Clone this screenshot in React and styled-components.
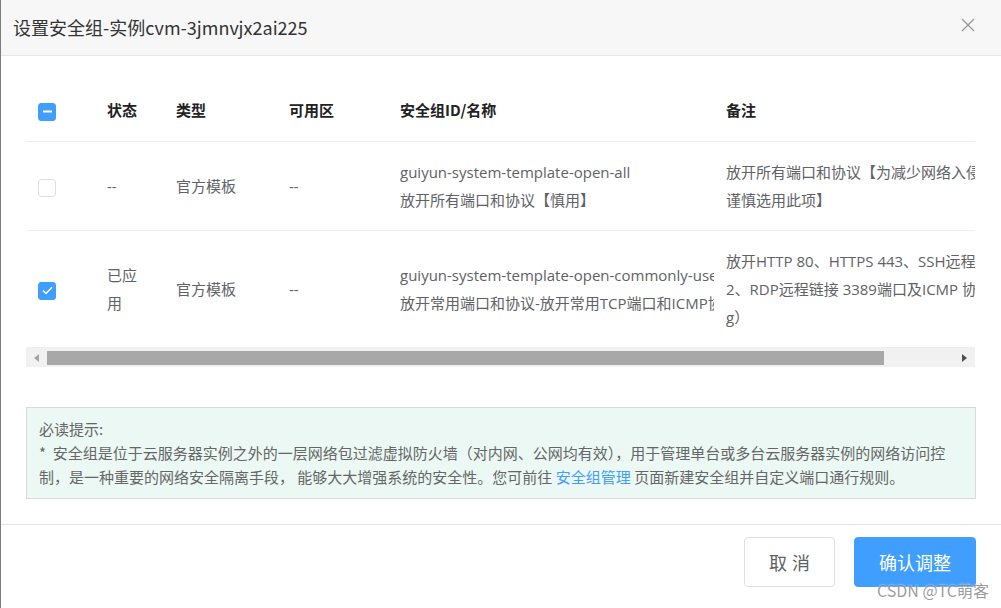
import styled, { createGlobalStyle } from "styled-components";

const GlobalStyle = createGlobalStyle`
  html, body {
    margin: 0;
    padding: 0;
    background: #ffffff;
  }
  body {
    font-family: "Open Sans", "Noto Sans CJK SC", sans-serif;
  }
`;

const Dialog = styled.div`
  position: relative;
  width: 1001px;
  height: 608px;
  box-sizing: border-box;
  border-left: 1px solid #7d7d7d;
  background: #fff;
  display: flex;
  flex-direction: column;
  overflow: hidden;
`;

const Header = styled.div`
  height: 56px;
  box-sizing: border-box;
  background: #f7f7f7;
  border-bottom: 1px solid #e6e6e6;
  display: flex;
  align-items: center;
  justify-content: space-between;
  padding: 0 26px 2px 12px;
`;

const Title = styled.h2`
  margin: 0;
  font-size: 18px;
  font-weight: 400;
  color: #333;
  font-family: "Noto Sans CJK SC", sans-serif;
`;

const CloseBtn = styled.button`
  border: none;
  background: none;
  padding: 0;
  width: 14px;
  height: 14px;
  display: flex;
  cursor: pointer;
  margin-bottom: 4px;
`;

const Body = styled.div`
  padding: 23px 25px 25px 25px;
  border-bottom: 1px solid #e4e4e4;
`;

const TableViewport = styled.div`
  width: 949px;
  overflow: hidden;
`;

const TableInner = styled.div`
  width: 1030px;
`;

const Row = styled.div`
  display: grid;
  grid-template-columns: 69px 69px 113px 111px 326px 342px;
  align-items: center;
  border-bottom: 1px solid #ebeef5;
  min-height: ${(p) => (p.$head ? "62px" : "auto")};
  font-size: 15px;
  color: ${(p) => (p.$head ? "#222" : "#606266")};
  font-weight: ${(p) => (p.$head ? 700 : 400)};
  font-family: ${(p) =>
    p.$head ? '"Noto Sans CJK SC", sans-serif' : '"Open Sans", "Noto Sans CJK SC", sans-serif'};
`;

const Cell = styled.div`
  padding: ${(p) => (p.$head ? "0 12px" : "16px 12px")};
  line-height: 28px;
  overflow: hidden;
  white-space: ${(p) => (p.$nowrap ? "nowrap" : "normal")};
  box-sizing: border-box;
`;

const Line = styled.div`
  white-space: nowrap;
  line-height: 28px;
`;

const Box = styled.span`
  display: inline-flex;
  align-items: center;
  justify-content: center;
  width: 18px;
  height: 18px;
  box-sizing: border-box;
  border-radius: 3px;
  vertical-align: middle;
  background: ${(p) => (p.$on ? "#409eff" : "#fff")};
  border: 1px solid ${(p) => (p.$on ? "#409eff" : "#dcdfe6")};
`;

const Checkbox = ({ state }) => (
  <Box $on={state !== "off"}>
    {state === "partial" && (
      <svg width="9" height="3" viewBox="0 0 9 3">
        <rect x="0" y="0.5" width="9" height="2" fill="#fff" />
      </svg>
    )}
    {state === "on" && (
      <svg width="11" height="9" viewBox="0 0 11 9">
        <path d="M1 4.5 L4 7.5 L10 1.2" stroke="#fff" strokeWidth="1.4" fill="none" />
      </svg>
    )}
  </Box>
);

const ScrollBar = styled.div`
  display: flex;
  align-items: center;
  height: 19px;
  background: #f1f1f1;
  width: 949px;
`;

const ArrowBtn = styled.div`
  width: 21px;
  height: 19px;
  display: flex;
  align-items: center;
  justify-content: center;
  flex: none;
`;

const Track = styled.div`
  flex: 1;
  height: 19px;
  display: flex;
  align-items: center;
`;

const Thumb = styled.div`
  height: 14px;
  background: #a8a8a8;
`;

const Notice = styled.div`
  margin-top: 40px;
  background: #ebf8f4;
  border: 1px solid #dadada;
  padding: 9px 12px 9px 12px;
  font-size: 15px;
  color: #666;
  line-height: 24px;
  font-family: "Noto Sans CJK SC", sans-serif;
`;

const Link = styled.a`
  color: #409eff;
  text-decoration: none;
`;

const Footer = styled.div`
  display: flex;
  justify-content: flex-end;
  gap: 19px;
  padding: 12px 25px 0 0;
`;

const Button = styled.button`
  height: 50px;
  padding: 0 ${(p) => (p.$primary ? "24px" : "19px")};
  border-radius: 4px;
  font-size: 18px;
  font-family: "Noto Sans CJK SC", sans-serif;
  cursor: pointer;
  background: ${(p) => (p.$primary ? "#409eff" : "#fff")};
  color: ${(p) => (p.$primary ? "#fff" : "#606266")};
  border: 1px solid ${(p) => (p.$primary ? "#409eff" : "#dcdfe6")};
  letter-spacing: ${(p) => (p.$primary ? "0" : "5px")};
  text-indent: ${(p) => (p.$primary ? "0" : "5px")};
`;

const Watermark = styled.div`
  position: absolute;
  right: 12px;
  bottom: 6px;
  font-size: 16px;
  color: rgba(110, 110, 110, 0.7);
  font-family: "Noto Sans CJK SC", sans-serif;
  text-shadow: 0 0 2px #fff;
`;

const rows = [
  {
    check: "off",
    state: ["--"],
    type: "官方模板",
    zone: "--",
    group: ["guiyun-system-template-open-all", "放开所有端口和协议【慎用】"],
    note: ["放开所有端口和协议【为减少网络入侵风险，请", "谨慎选用此项】"],
  },
  {
    check: "on",
    state: ["已应", "用"],
    type: "官方模板",
    zone: "--",
    group: [
      "guiyun-system-template-open-commonly-used",
      "放开常用端口和协议-放开常用TCP端口和ICMP协议",
    ],
    note: [
      "放开HTTP 80、HTTPS 443、SSH远程链接 2",
      "2、RDP远程链接 3389端口及ICMP 协议（用于Pin",
      "g）",
    ],
  },
];

export default function App() {
  return (
    <>
      <GlobalStyle />
      <Dialog>
        <Header>
          <Title>设置安全组-实例cvm-3jmnvjx2ai225</Title>
          <CloseBtn aria-label="close">
            <svg width="14" height="14" viewBox="0 0 14 14">
              <path d="M1 1 L13 13 M13 1 L1 13" stroke="#999" strokeWidth="1.3" />
            </svg>
          </CloseBtn>
        </Header>
        <Body>
          <TableViewport>
            <TableInner>
              <Row $head>
                <Cell $head>
                  <Checkbox state="partial" />
                </Cell>
                <Cell $head>状态</Cell>
                <Cell $head>类型</Cell>
                <Cell $head>可用区</Cell>
                <Cell $head>安全组ID/名称</Cell>
                <Cell $head>备注</Cell>
              </Row>
              {rows.map((r, i) => (
                <Row key={i}>
                  <Cell>
                    <Checkbox state={r.check} />
                  </Cell>
                  <Cell>
                    {r.state.map((s) => (
                      <Line key={s}>{s}</Line>
                    ))}
                  </Cell>
                  <Cell>{r.type}</Cell>
                  <Cell>{r.zone}</Cell>
                  <Cell $nowrap>
                    {r.group.map((g) => (
                      <Line key={g}>{g}</Line>
                    ))}
                  </Cell>
                  <Cell $nowrap>
                    {r.note.map((n) => (
                      <Line key={n}>{n}</Line>
                    ))}
                  </Cell>
                </Row>
              ))}
            </TableInner>
          </TableViewport>
          <ScrollBar>
            <ArrowBtn>
              <svg width="5" height="8" viewBox="0 0 5 8">
                <path d="M5 0 L0 4 L5 8 Z" fill="#a3a3a3" />
              </svg>
            </ArrowBtn>
            <Track>
              <Thumb style={{ width: `${(837 / 907) * 100}%` }} />
            </Track>
            <ArrowBtn>
              <svg width="5" height="8" viewBox="0 0 5 8">
                <path d="M0 0 L5 4 L0 8 Z" fill="#505050" />
              </svg>
            </ArrowBtn>
          </ScrollBar>
          <Notice>
            <div>必读提示:</div>
            <div>
              *&nbsp; 安全组是位于云服务器实例之外的一层网络包过滤虚拟防火墙（对内网、公网均有效），用于管理单台或多台云服务器实例的网络访问控制，是一种重要的网络安全隔离手段， 能够大大增强系统的安全性。您可前往{" "}
              <Link href="#">安全组管理</Link> 页面新建安全组并自定义端口通行规则。
            </div>
          </Notice>
        </Body>
        <Footer>
          <Button>取消</Button>
          <Button $primary>确认调整</Button>
        </Footer>
        <Watermark>CSDN @TC萌客</Watermark>
      </Dialog>
    </>
  );
}
